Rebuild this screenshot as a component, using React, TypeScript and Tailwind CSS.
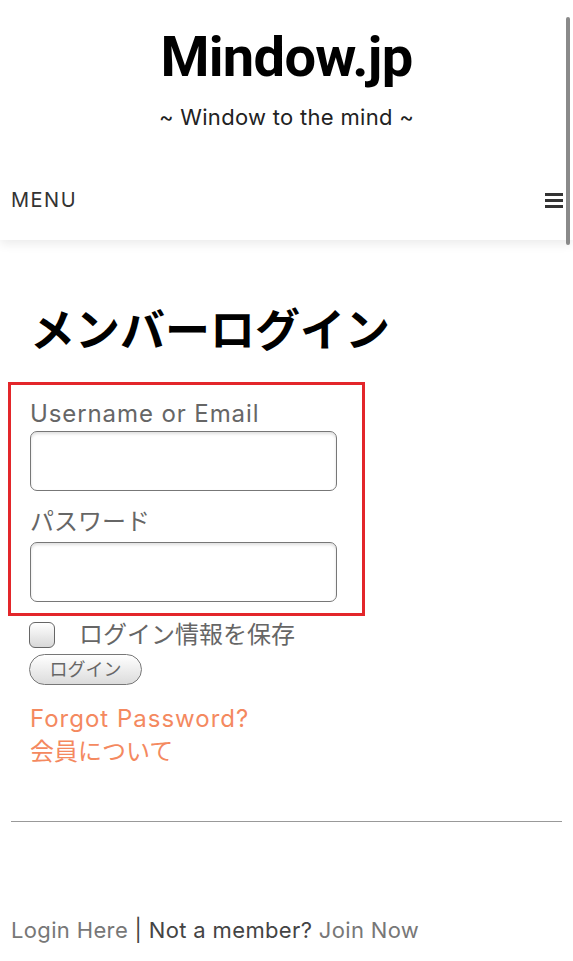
export default function App() {
  const jp = "font-['Inter','Noto_Sans_CJK_JP',sans-serif]";
  return (
    <div className={`relative min-h-[961px] w-[573px] bg-white ${jp}`}>
      {/* Header */}
      <header className="relative z-10 bg-white pt-[25px] pb-[25px] shadow-[0_4px_10px_rgba(0,0,0,0.08)]">
        <h1 className="text-center font-['Roboto',sans-serif] text-[56px] font-bold leading-[64px] tracking-[-0.7px] text-black">
          Mindow.jp
        </h1>
        <p className="mt-[13px] text-center text-[22px] leading-[30px] tracking-[0.3px] text-[#222]">
          ~ Window to the mind ~
        </p>
        <div className="mt-[53px] flex items-center justify-between pl-[11px] pr-[10px]">
          <span className="text-[20px] leading-[30px] tracking-[1.5px] text-[#333]">MENU</span>
          <span className="flex w-[18px] flex-col gap-[3px]">
            <span className="h-[3px] bg-[#333]" />
            <span className="h-[3px] bg-[#333]" />
            <span className="h-[3px] bg-[#333]" />
          </span>
        </div>
      </header>

      {/* scroll indicator */}
      <div className="absolute right-[3px] top-[17px] z-20 h-[228px] w-[4px] rounded-full bg-[#8a8a8a]" />

      {/* Login form */}
      <main className="px-[8px] pt-[60px]">
        <h2 className="ml-[22px] font-['Noto_Sans_CJK_JP',sans-serif] text-[45px] font-bold leading-[56px] text-black">
          メンバーログイン
        </h2>

        <div className="mt-[26px] w-[357px] border-[3px] border-[#e3262a] pb-[11px] pl-[19px] pr-[24px] pt-[13px]">
          <label className="block text-[24px] leading-[32px] tracking-[0.9px] text-[#666]">Username or Email</label>
          <input
            type="text"
            className="mt-[1px] block h-[60px] w-[307px] rounded-[7px] border-[1.5px] border-[#777] bg-white shadow-[inset_0_2px_3px_rgba(0,0,0,0.12)] outline-none"
          />
          <label className="mt-[15px] block text-[24px] leading-[32px] text-[#666]">パスワード</label>
          <input
            type="password"
            className="mt-[4px] block h-[60px] w-[307px] rounded-[7px] border-[1.5px] border-[#777] bg-white shadow-[inset_0_2px_3px_rgba(0,0,0,0.12)] outline-none"
          />
        </div>

        <div className="ml-[21px] mt-[4px] flex items-center">
          <span className="h-[26px] w-[26px] rounded-[6px] border-[1.5px] border-[#666] bg-gradient-to-b from-white to-[#d8d8d8]" />
          <span className="ml-[24px] text-[24px] leading-[30px] text-[#666]">ログイン情報を保存</span>
        </div>

        <button className="ml-[21px] mt-[4px] flex h-[31px] w-[113px] items-center justify-center rounded-full border-[1.5px] border-[#777] bg-gradient-to-b from-white to-[#dcdcdc] text-[18px] leading-none text-[#666]">
          ログイン
        </button>

        <div className="ml-[22px] mt-[17px] text-[24px] leading-[33px] text-[#f4895f]">
          <a href="#" className="block tracking-[1px]">Forgot Password?</a>
          <a href="#" className="block">会員について</a>
        </div>
      </main>

      <hr className="mx-[11px] mt-[53px] border-t-[1.5px] border-[#999]" />

      <footer className="pl-[11px] pt-[93px] text-[22px] leading-[30px] tracking-[0.35px]">
        <a href="#" className="text-[#777]">Login Here</a>
        <span className="text-[#444]"> | Not a member? </span>
        <a href="#" className="text-[#777]">Join Now</a>
      </footer>
    </div>
  );
}
